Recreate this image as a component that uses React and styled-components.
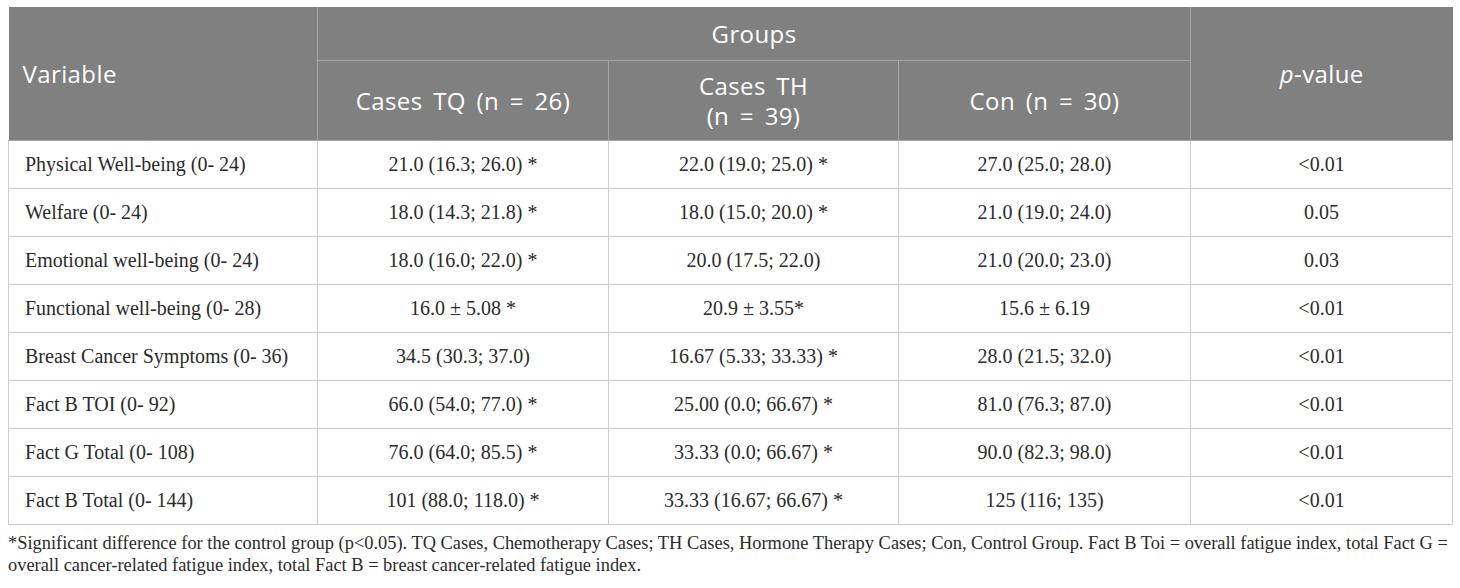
import React from 'react'
import styled, { createGlobalStyle } from 'styled-components'

const Global = createGlobalStyle`
  body {
    margin: 0;
    background: #fff;
  }
`

const Page = styled.div`
  padding: 7px 8px 0 8px;
  width: 1444px;
`

const Table = styled.table`
  width: 1444px;
  border-collapse: collapse;
  table-layout: fixed;
`

const HeadCell = styled.th`
  background: #7f807f;
  color: #fff;
  font-family: "Open Sans", "Noto Sans", sans-serif;
  font-weight: 400;
  font-size: 24px;
  letter-spacing: 0.4px;
  word-spacing: 4px;
  line-height: 30px;
  text-align: ${p => (p.left ? 'left' : 'center')};
  padding: ${p => (p.left ? '0 14px' : '0 10px')};
  border: 1px solid #a5a6a5;
  border-top: none;
  height: ${p => p.h || 'auto'};
  vertical-align: middle;
  &:first-child { border-left: none; }
  &:last-child { border-right: none; }
`

const HeadRow = styled.tr`
  &:first-child th { border-top: 1px solid #7f807f; }
`

const Cell = styled.td`
  font-family: "Liberation Serif", "Times New Roman", serif;
  font-size: 20px;
  color: #2b2b2b;
  height: 47px;
  padding: ${p => (p.left ? '0 16px' : '0 8px')};
  text-align: ${p => (p.left ? 'left' : 'center')};
  border: 1px solid #cdcdcd;
  white-space: nowrap;
`

const Note = styled.p`
  margin: 7px 0 0 0;
  font-family: "Liberation Serif", "Times New Roman", serif;
  font-size: 18.4px;
  line-height: 22px;
  color: #2b2b2b;
  white-space: nowrap;
`

const rows = [
  ['Physical Well-being (0- 24)', '21.0 (16.3; 26.0) *', '22.0 (19.0; 25.0) *', '27.0 (25.0; 28.0)', '<0.01'],
  ['Welfare (0- 24)', '18.0 (14.3; 21.8) *', '18.0 (15.0; 20.0) *', '21.0 (19.0; 24.0)', '0.05'],
  ['Emotional well-being (0- 24)', '18.0 (16.0; 22.0) *', '20.0 (17.5; 22.0)', '21.0 (20.0; 23.0)', '0.03'],
  ['Functional well-being (0- 28)', '16.0 ± 5.08 *', '20.9 ± 3.55*', '15.6 ± 6.19', '<0.01'],
  ['Breast Cancer Symptoms (0- 36)', '34.5 (30.3; 37.0)', '16.67 (5.33; 33.33) *', '28.0 (21.5; 32.0)', '<0.01'],
  ['Fact B TOI (0- 92)', '66.0 (54.0; 77.0) *', '25.00 (0.0; 66.67) *', '81.0 (76.3; 87.0)', '<0.01'],
  ['Fact G Total (0- 108)', '76.0 (64.0; 85.5) *', '33.33 (0.0; 66.67) *', '90.0 (82.3; 98.0)', '<0.01'],
  ['Fact B Total (0- 144)', '101 (88.0; 118.0) *', '33.33 (16.67; 66.67) *', '125 (116; 135)', '<0.01'],
]

export default function App() {
  return (
    <Page>
      <Global />
      <Table>
        <colgroup>
          <col style={{ width: 309 }} />
          <col style={{ width: 291 }} />
          <col style={{ width: 290 }} />
          <col style={{ width: 292 }} />
          <col style={{ width: 262 }} />
        </colgroup>
        <thead>
          <HeadRow>
            <HeadCell left rowSpan={2}>Variable</HeadCell>
            <HeadCell colSpan={3} h="52px">Groups</HeadCell>
            <HeadCell rowSpan={2}><i>p</i>-value</HeadCell>
          </HeadRow>
          <HeadRow>
            <HeadCell h="79px">Cases TQ (n = 26)</HeadCell>
            <HeadCell h="79px">Cases TH<br />(n = 39)</HeadCell>
            <HeadCell h="79px">Con (n = 30)</HeadCell>
          </HeadRow>
        </thead>
        <tbody>
          {rows.map((r, i) => (
            <tr key={i}>
              {r.map((c, j) => (
                <Cell key={j} left={j === 0}>{c}</Cell>
              ))}
            </tr>
          ))}
        </tbody>
      </Table>
      <Note>
        *Significant difference for the control group (p&lt;0.05). TQ Cases, Chemotherapy Cases; TH Cases, Hormone Therapy Cases; Con, Control Group. Fact B Toi = overall fatigue index, total Fact G =
        <br />
        overall cancer-related fatigue index, total Fact B = breast cancer-related fatigue index.
      </Note>
    </Page>
  )
}
